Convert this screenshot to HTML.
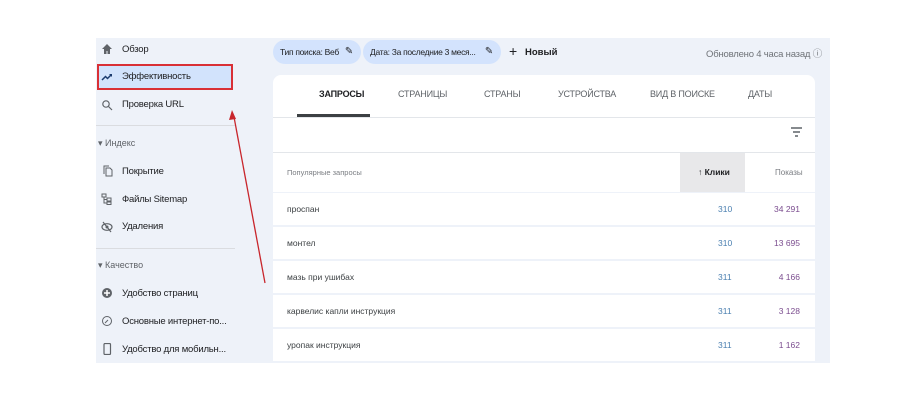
<!DOCTYPE html>
<html><head><meta charset="utf-8"><style>
*{margin:0;padding:0;box-sizing:border-box}
body{width:900px;height:400px;background:#fff;position:relative;overflow:hidden;font-family:"Liberation Sans",sans-serif;color:#202124}
.bg{position:absolute;left:96px;top:38px;width:734px;height:325px;background:#eef2f9}
.s{position:absolute;left:122px;font-size:9.5px;color:#202124;white-space:nowrap;letter-spacing:-0.2px}
.ic{position:absolute;left:101px;width:12px;height:12px}
.sec{position:absolute;left:98px;font-size:9px;color:#5f6368}
.dv{position:absolute;left:96px;width:139px;height:1px;background:#dadce0}
.hl{position:absolute;left:97px;top:64px;width:136px;height:26px;background:#d2e3fc;border:2px solid #d93036}
.chip{position:absolute;top:40px;height:24px;background:#d3e3fd;border-radius:12px;font-size:8.5px;line-height:24px;padding-left:7px;color:#202124;letter-spacing:-0.3px;white-space:nowrap}
.card{position:absolute;left:273px;top:75px;width:542px;height:117px;background:#fff;border-radius:8px 8px 0 0}
.tab{position:absolute;top:89px;font-size:9px;color:#5f6368;letter-spacing:-0.2px}
.row{position:absolute;left:273px;width:542px;height:32px;background:#fff;font-size:8.5px;color:#3c4043}
.row span{position:absolute;top:11px}
.c{color:#4a7fb0}.p{color:#7b4d8f}
</style></head><body>
<div class="bg"></div>
<div class="hl"></div>
<svg class="ic" style="top:43px" viewBox="0 0 12 12"><path d="M6 1L1 6h2v5h2.5V8h1v3H9V6h2z" fill="#5f6368"/></svg>
<div class="s" style="top:44px">Обзор</div>
<svg class="ic" style="top:71px" viewBox="0 0 12 12"><path d="M1 9l3.5-3.5 2 2L10 4" stroke="#1a3b6e" stroke-width="1.5" fill="none"/><path d="M8 3h3v3z" fill="#1a3b6e"/></svg>
<div class="s" style="top:71px">Эффективность</div>
<svg class="ic" style="top:99px" viewBox="0 0 12 12"><circle cx="5" cy="5" r="3.2" stroke="#5f6368" stroke-width="1.2" fill="none"/><path d="M7.5 7.5L11 11" stroke="#5f6368" stroke-width="1.2"/></svg>
<div class="s" style="top:99px">Проверка URL</div>
<div class="dv" style="top:125px"></div>
<div class="sec" style="top:138px">▾ Индекс</div>
<svg class="ic" style="top:165px" viewBox="0 0 12 12"><path d="M3 9V1h5M5 3h4l2 2v6H5z" stroke="#5f6368" stroke-width="1" fill="none"/></svg>
<div class="s" style="top:166px">Покрытие</div>
<svg class="ic" style="top:193px" viewBox="0 0 12 12"><rect x="1" y="1" width="4" height="3" stroke="#5f6368" fill="none"/><rect x="6" y="5" width="4" height="3" stroke="#5f6368" fill="none"/><rect x="6" y="9" width="4" height="2.5" stroke="#5f6368" fill="none"/><path d="M3 4v6h3M3 6.5h3" stroke="#5f6368" fill="none"/></svg>
<div class="s" style="top:194px">Файлы Sitemap</div>
<svg class="ic" style="top:221px" viewBox="0 0 12 12"><ellipse cx="6" cy="6" rx="5" ry="3.3" stroke="#5f6368" stroke-width="1.2" fill="none"/><circle cx="6" cy="6" r="1.5" fill="#5f6368"/><path d="M2 1l8 10" stroke="#5f6368" stroke-width="1.2"/></svg>
<div class="s" style="top:221px">Удаления</div>
<div class="dv" style="top:248px"></div>
<div class="sec" style="top:260px">▾ Качество</div>
<svg class="ic" style="top:287px" viewBox="0 0 12 12"><circle cx="6" cy="6" r="5" fill="#5f6368"/><path d="M6 3v6M3 6h6" stroke="#fff" stroke-width="1.5"/></svg>
<div class="s" style="top:288px">Удобство страниц</div>
<svg class="ic" style="top:315px" viewBox="0 0 12 12"><circle cx="6" cy="6" r="4.5" stroke="#5f6368" fill="none"/><path d="M4 8l3-3" stroke="#5f6368"/></svg>
<div class="s" style="top:316px">Основные интернет-по...</div>
<svg class="ic" style="top:343px" viewBox="0 0 12 12"><rect x="3" y="0.5" width="6.5" height="11" rx="1" stroke="#5f6368" stroke-width="1.2" fill="none"/></svg>
<div class="s" style="top:344px">Удобство для мобильн...</div>

<div class="chip" style="left:273px;width:88px">Тип поиска: Веб <span style="position:absolute;right:8px;font-size:10px">✎</span></div>
<div class="chip" style="left:363px;width:138px">Дата: За последние 3 меся... <span style="position:absolute;right:8px;font-size:10px">✎</span></div>
<div style="position:absolute;left:509px;top:43px;font-size:14px">+</div>
<div style="position:absolute;left:525px;top:47px;font-size:9.5px;font-weight:bold">Новый</div>
<div style="position:absolute;right:78px;top:46px;font-size:9.5px;color:#6f7378;letter-spacing:-0.2px">Обновлено 4 часа назад ⓘ</div>

<div class="card"></div>
<div class="tab" style="left:319px;color:#202124;font-weight:bold">ЗАПРОСЫ</div>
<div class="tab" style="left:398px">СТРАНИЦЫ</div>
<div class="tab" style="left:484px">СТРАНЫ</div>
<div class="tab" style="left:558px">УСТРОЙСТВА</div>
<div class="tab" style="left:650px">ВИД В ПОИСКЕ</div>
<div class="tab" style="left:748px">ДАТЫ</div>
<div style="position:absolute;left:297px;top:114px;width:73px;height:3px;background:#3c4043"></div>
<div style="position:absolute;left:273px;top:117px;width:542px;height:1px;background:#e3e6ea"></div>
<svg style="position:absolute;left:790px;top:127px" width="13" height="10" viewBox="0 0 13 10"><path d="M1 1h11M3 5h7M5 9h3" stroke="#5f6368" stroke-width="1.5"/></svg>
<div style="position:absolute;left:273px;top:152px;width:542px;height:1px;background:#e3e6ea"></div>
<div style="position:absolute;left:680px;top:153px;width:65px;height:39px;background:#e8e8ea"></div>
<div style="position:absolute;left:287px;top:168px;font-size:7.5px;color:#7a7d82">Популярные запросы</div>
<div style="position:absolute;left:698px;top:167px;font-size:8.5px;font-weight:bold;color:#202124">↑ Клики</div>
<div style="position:absolute;left:775px;top:168px;font-size:8px;color:#7a7d82">Показы</div>

<div class="row" style="top:193px"><span style="left:14px">проспан</span><span class="c" style="left:445px">310</span><span class="p" style="right:15px">34 291</span></div>
<div class="row" style="top:227px"><span style="left:14px">монтел</span><span class="c" style="left:445px">310</span><span class="p" style="right:15px">13 695</span></div>
<div class="row" style="top:261px"><span style="left:14px">мазь при ушибах</span><span class="c" style="left:445px">311</span><span class="p" style="right:15px">4 166</span></div>
<div class="row" style="top:295px"><span style="left:14px">карвелис капли инструкция</span><span class="c" style="left:445px">311</span><span class="p" style="right:15px">3 128</span></div>
<div class="row" style="top:329px"><span style="left:14px">уропак инструкция</span><span class="c" style="left:445px">311</span><span class="p" style="right:15px">1 162</span></div>

<svg style="position:absolute;left:0;top:0" width="900" height="400"><path d="M265 283L234 117" stroke="#c8262c" stroke-width="1.3"/><path d="M232 110l-3 10 7-1z" fill="#c8262c"/></svg>
</body></html>
